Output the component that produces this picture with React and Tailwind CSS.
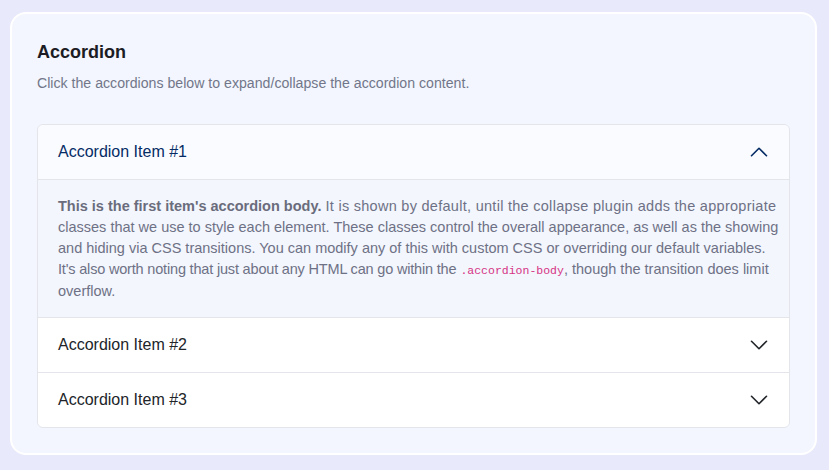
import { useState } from "react";

const items = [
  { id: 1, title: "Accordion Item #1" },
  { id: 2, title: "Accordion Item #2" },
  { id: 3, title: "Accordion Item #3" },
];

function Chevron({ up }) {
  return (
    <svg width="20" height="20" viewBox="0 0 16 16" fill="none" className="shrink-0">
      <path
        d={up ? "M2 11L8 5L14 11" : "M2 5L8 11L14 5"}
        stroke={up ? "#052c65" : "#212529"}
        strokeWidth="1.3"
        strokeLinecap="round"
        strokeLinejoin="round"
      />
    </svg>
  );
}

export default function App() {
  const [open, setOpen] = useState(1);

  const toggle = (id) => setOpen((o) => (o === id ? null : id));

  return (
    <div
      className="min-h-[470px] bg-[#e8eafb] pl-[10px] pr-[12px] pt-[12px] pb-[15px]"
      style={{ fontFamily: '"Liberation Sans", Arial, sans-serif' }}>
      <section className="h-[443px] rounded-[16px] border-2 border-white bg-[#f3f6fe] px-[25px] pt-[25px]">
        <h2 className="text-[18px] leading-[27px] font-bold text-[#1c1c24]">Accordion</h2>
        <p className="mt-[7px] text-[14.15px] leading-[21px] text-[#72768a]">
          Click the accordions below to expand/collapse the accordion content.
        </p>

        <div className="mt-[30px] overflow-hidden rounded-[6px] border border-[#e3e5eb]">
          {items.map((it, i) => {
            const isOpen = open === it.id;
            return (
              <div key={it.id} className={i > 0 ? "border-t border-[#e3e5eb]" : ""}>
                <button
                  type="button"
                  onClick={() => toggle(it.id)}
                  className={
                    "flex w-full items-center justify-between px-[20px] py-[15px] text-left text-[16px] leading-[24px] " +
                    (isOpen ? "bg-[#fafbff] text-[#052c65]" : "bg-white text-[#212529]")
                  }>
                  <span>{it.title}</span>
                  <Chevron up={isOpen} />
                </button>

                {isOpen && (
                  <div className="border-t border-[#e3e5eb] bg-[#f3f6fd] pl-[20px] pr-[8px] pt-[16px] pb-[15px] text-[14.5px] leading-[21px] text-[#6e7185] whitespace-nowrap">
                    <strong className="font-bold text-[#6a6c7c]">This is the first item's accordion body.</strong>{" "}
                    <span className="tracking-[0.28px]">
                      It is shown by default, until the collapse plugin adds the appropriate
                    </span>
                    <br />
                    classes that we use to style each element. These classes control the overall appearance, as well as the showing
                    <br />
                    and hiding via CSS transitions. You can modify any of this with custom CSS or overriding our default variables.
                    <br />
                    <span className="tracking-[-0.18px]">
                      It's also worth noting that just about any HTML can go within the
                    </span>{" "}
                    <code
                      className="text-[11.5px] text-[#d63384]"
                      style={{ fontFamily: '"Liberation Mono", "DejaVu Sans Mono", monospace' }}>
                      .accordion-body
                    </code>
                    , though the transition does limit
                    <br />
                    overflow.
                  </div>
                )}
              </div>
            );
          })}
        </div>
      </section>
    </div>
  );
}
